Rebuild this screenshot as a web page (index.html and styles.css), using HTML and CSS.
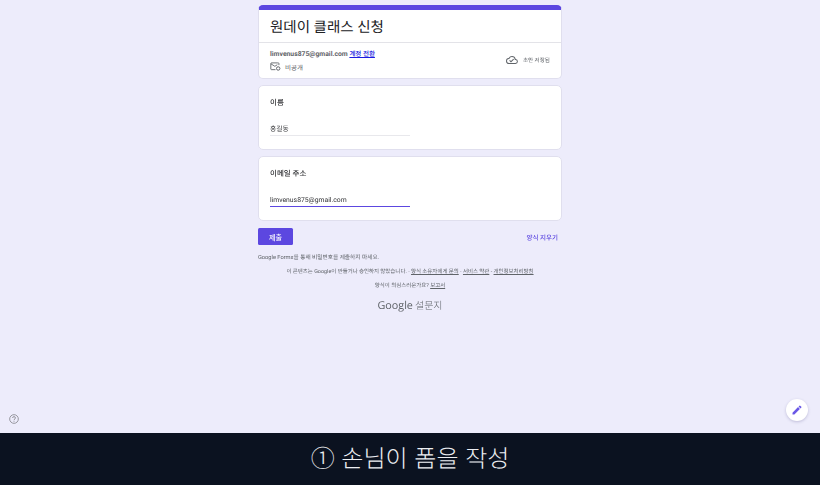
FILE: index.html
```html
<!DOCTYPE html>
<html lang="ko">
<head>
<meta charset="utf-8">
<title>원데이 클래스 신청</title>
<link rel="stylesheet" href="styles.css">
</head>
<body>
<main class="page">
  <div class="column">
    <section class="card head-card">
      <h1 class="title">원데이 클래스 신청</h1>
      <div class="account">
        <div class="account-left">
          <div class="email-line"><b>limvenus875@gmail.com</b> <a class="switch" href="#">계정 전환</a></div>
          <div class="private">
            <svg class="ic-private" viewBox="0 0 12 10" width="11" height="9"><path d="M8 1H1.5a.7.7 0 0 0-.7.7v6.1a.7.7 0 0 0 .7.7H6M.9 2l4.4 2.8L8 3M9.8 3.5V1.7a.7.7 0 0 0-.7-.7H8" fill="none" stroke="#5f6368" stroke-width="1"/><circle cx="9" cy="7.2" r="1.9" fill="none" stroke="#5f6368" stroke-width="1.1"/></svg>
            <span>비공개</span>
          </div>
        </div>
        <div class="saved">
          <svg viewBox="0 0 24 24" width="12" height="12"><path d="M19.35 10.04A7.49 7.49 0 0 0 12 4a7.5 7.5 0 0 0-6.65 4.04A6 6 0 0 0 6 20h13a5 5 0 0 0 .35-9.96ZM19 18H6a4 4 0 0 1-.42-7.98l1.07-.11.5-.95A5.47 5.47 0 0 1 12 6a5.5 5.5 0 0 1 5.39 4.42l.3 1.5 1.53.11A3 3 0 0 1 19 18ZM10 17l-3.5-3.5 1.41-1.41L10 14.17l4.6-4.6 1.41 1.41L10 17Z" fill="#5f6368"/></svg>
          <span>초안 저장됨</span>
        </div>
      </div>
    </section>
    <section class="card field">
      <div class="label">이름</div>
      <div class="input">홍길동</div>
    </section>
    <section class="card field">
      <div class="label">이메일 주소</div>
      <div class="input input-active">limvenus875@gmail.com</div>
    </section>
    <div class="actions">
      <button class="submit" type="button">제출</button>
      <a class="clear" href="#">양식 지우기</a>
    </div>
    <p class="warn">Google Forms를 통해 비밀번호를 제출하지 마세요.</p>
  </div>
  <p class="note">이 콘텐츠는 Google이 만들거나 승인하지 않았습니다. - <u>양식 소유자에게 문의</u> - <u>서비스 약관</u> - <u>개인정보처리방침</u></p>
  <p class="note report">양식이 의심스러운가요? <u>보고서</u></p>
  <div class="brand"><span class="google">Google</span><span class="forms">설문지</span></div>
</main>
<svg class="help" viewBox="0 0 24 24" width="10" height="10"><circle cx="12" cy="12" r="10.4" fill="none" stroke="#85858c" stroke-width="2"/><path d="M8.6 9.6a3.4 3.4 0 0 1 6.8 0c0 2.4-3.4 2.6-3.4 5M12 16.4v2.2" fill="none" stroke="#85858c" stroke-width="2"/></svg>
<div class="fab">
  <svg viewBox="0 0 24 24" width="12" height="12"><path d="M3 17.25V21h3.75L17.81 9.94l-3.75-3.75L3 17.25Zm17.71-10.21a1 1 0 0 0 0-1.41l-2.34-2.34a1 1 0 0 0-1.41 0l-1.83 1.83 3.75 3.75 1.83-1.83Z" fill="#6a58e6"/></svg>
</div>
<footer class="caption">① 손님이 폼을 작성</footer>
</body>
</html>
```
FILE: styles.css
```css
* { box-sizing: border-box; }
html, body { margin: 0; height: 485px; overflow: hidden; }
body {
  background: #edecfb;
  font-family: Roboto, "Noto Sans CJK KR", sans-serif;
  color: #202124;
  display: flex;
  flex-direction: column;
  position: relative;
  text-rendering: geometricPrecision;
}
.page { flex: 1; display: flex; flex-direction: column; align-items: center; padding-top: 5px; filter: blur(.3px); opacity: .995; }
.column { width: 304px; display: flex; flex-direction: column; gap: 6px; }
.card {
  background: #fff;
  border: 1px solid #e0dfee;
  border-radius: 5px;
}
.head-card { height: 74px; border-top: 5px solid #5b46e0; }
.title {
  margin: 0;
  height: 33px;
  padding: 6px 11px 0;
  font-size: 14.5px;
  line-height: 23px;
  font-weight: 400;
  border-bottom: 1px solid #e3e3e8;
}
.account { display: flex; justify-content: space-between; align-items: center; padding: 0 11px 2px; height: 36px; }
.email-line { font-size: 6.8px; line-height: 10px; color: #5f6368; }
.email-line b { font-weight: 700; color: #5f6368; }
.switch { color: #1a1ae0; font-weight: 500; font-size: 6.5px; }
.private { display: flex; align-items: center; gap: 4px; margin-top: 3px; font-size: 6.5px; color: #5f6368; }
.saved { display: flex; align-items: center; gap: 5px; font-size: 5.6px; color: #5f6368; }
.field { height: 65px; padding: 11px 11px 0; }
.label { font-size: 7.5px; font-weight: 500; line-height: 12px; color: #303134; }
.input {
  margin-top: 11px;
  width: 140px;
  height: 16px;
  padding-top: 4px;
  font-size: 6.8px;
  line-height: 10px;
  border-bottom: 1px solid #e8e8ec;
  color: #303134;
}
.input-active { border-bottom: 1px solid #5b46e0; }
.actions { display: flex; justify-content: space-between; align-items: center; height: 17px; margin-top: 1px; }
.submit {
  width: 35px;
  height: 17px;
  border: 0;
  border-radius: 1.5px;
  background: #5b46e0;
  color: #fff;
  font: 500 7px Roboto, "Noto Sans CJK KR", sans-serif;
  padding: 0;
}
.clear { font-size: 6.5px; font-weight: 500; color: #5b46e0; text-decoration: none; margin-right: 4px; }
.warn { margin: 2px 0 0; font-size: 5.7px; line-height: 10px; color: #5f6368; }
.note { margin: 5px 0 0; font-size: 5.45px; line-height: 9px; color: #5f6368; text-align: center; }
.note.report { margin-top: 5px; }
.brand { margin-top: 7px; display: flex; align-items: baseline; gap: 2px; color: #5f6368; line-height: 15px; }
.google { font-family: "Open Sans", Roboto, sans-serif; font-size: 10.8px; font-weight: 500; }
.forms { font-size: 10px; font-weight: 300; }
.help { position: absolute; left: 9px; top: 414px; }
.fab {
  position: absolute;
  left: 786px;
  top: 399px;
  width: 22px;
  height: 22px;
  border-radius: 50%;
  background: #fff;
  box-shadow: 0 1px 3px rgba(60,50,120,.25);
  display: flex;
  align-items: center;
  justify-content: center;
}
.caption {
  height: 52px;
  flex: none;
  background: #0b1220;
  color: #eceef2;
  font-family: "Noto Sans CJK KR", sans-serif;
  font-size: 24px;
  font-weight: 300;
  line-height: 47px;
  text-align: center;
}
```
